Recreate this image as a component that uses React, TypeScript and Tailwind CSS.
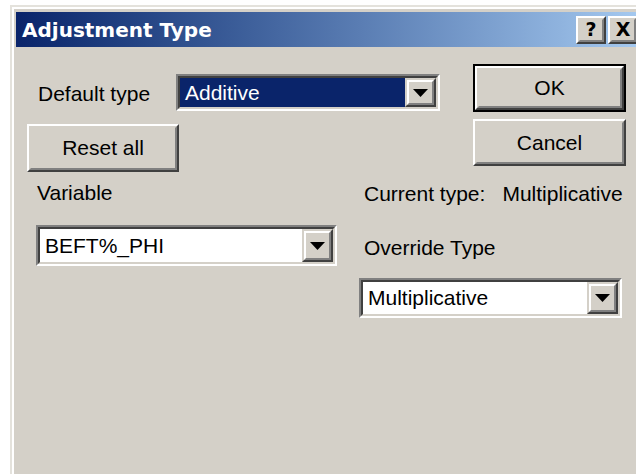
import type { ReactNode } from "react";

// Win2000-style bevels, drawn at 2x
function Raised({ children, className = "" }: { children?: ReactNode; className?: string }) {
  return (
    <div className={`border-2 border-t-white border-l-white border-r-[#404040] border-b-[#404040] ${className}`}>
      <div className="flex h-full w-full items-center justify-center border-2 border-t-[#d4d0c8] border-l-[#d4d0c8] border-r-[#808080] border-b-[#808080] bg-[#d4d0c8]">
        {children}
      </div>
    </div>
  );
}

function Arrow() {
  return (
    <svg width="15" height="8" viewBox="0 0 15 8">
      <polygon points="0,0 15,0 7.5,8" fill="#000" />
    </svg>
  );
}

function ComboBox({
  value,
  className = "",
  selected = false,
}: {
  value: string;
  className?: string;
  selected?: boolean;
}) {
  return (
    <div className={`border-2 border-t-[#808080] border-l-[#808080] border-r-white border-b-white ${className}`}>
      <div className="flex h-full border-2 border-t-[#404040] border-l-[#404040] border-r-[#d4d0c8] border-b-[#d4d0c8] bg-white">
        <div
          className={`flex flex-1 items-center pl-[5px] text-[21px] leading-[24px] ${
            selected ? "bg-[#0a246a] text-white" : "text-black"
          }`}
        >
          {value}
        </div>
        <div className="w-[31px] border-2 border-t-[#d4d0c8] border-l-[#d4d0c8] border-r-[#404040] border-b-[#404040]">
          <div className="flex h-full items-center justify-center border-2 border-t-white border-l-white border-r-[#808080] border-b-[#808080] bg-[#d4d0c8]">
            <Arrow />
          </div>
        </div>
      </div>
    </div>
  );
}

function TitleButton({ label }: { label: string }) {
  return (
    <Raised className="h-[28px] w-[30px]">
      <span className="font-['DejaVu_Sans',sans-serif] text-[19px] font-bold leading-none text-black">{label}</span>
    </Raised>
  );
}

export default function App() {
  return (
    <div className="h-[474px] w-[636px] overflow-hidden bg-white pl-[10px] pt-[5px] font-['Liberation_Sans',Arial,sans-serif] text-black">
      <div className="h-[480px] w-[650px] border-l-2 border-t-2 border-[#e4e2dc]">
        <div className="h-full border-l-2 border-t-2 border-white bg-[#d4d0c8] pl-[2px] pt-[3px]">
          {/* title bar */}
          <div className="flex h-[35px] w-[626px] items-center bg-linear-to-r from-[#0a246a] to-[#a6caf0] pl-[6px] pr-[4px]">
            <span className="font-['DejaVu_Sans',sans-serif] text-[20px] font-bold leading-none text-white">
              Adjustment Type
            </span>
            <div className="ml-auto flex gap-[2px]">
              <TitleButton label="?" />
              <TitleButton label="X" />
            </div>
          </div>

          <div className="pl-[11px] pt-[17px] text-[21px] leading-[24px]">
            <div className="flex">
              <div className="flex flex-col">
                <div className="mt-[10px] flex items-center">
                  <span className="w-[149px] pl-[11px] pt-[3px]">Default type</span>
                  <ComboBox value="Additive" selected className="h-[37px] w-[264px]" />
                </div>
                <Raised className="mt-[13px] h-[48px] w-[152px]">Reset all</Raised>
              </div>
              <div className="ml-[33px] flex flex-col">
                <div className="border-2 border-black">
                  <Raised className="h-[44px] w-[149px]">OK</Raised>
                </div>
                <Raised className="mt-[7px] h-[47px] w-[153px]">Cancel</Raised>
              </div>
            </div>

            <div className="flex">
              <div className="flex w-[310px] flex-col">
                <span className="mt-[9px] pl-[10px]">Variable</span>
                <ComboBox value="BEFT%_PHI" className="ml-[9px] mt-[20px] h-[41px] w-[301px]" />
              </div>
              <div className="ml-[22px] flex flex-col">
                <div className="mt-[10px] flex pl-[5px]">
                  <span>Current type:</span>
                  <span className="ml-[17px]">Multiplicative</span>
                </div>
                <span className="mt-[30px] pl-[5px]">Override Type</span>
                <ComboBox value="Multiplicative" className="mt-[18px] h-[40px] w-[263px]" />
              </div>
            </div>
          </div>
        </div>
      </div>
    </div>
  );
}
